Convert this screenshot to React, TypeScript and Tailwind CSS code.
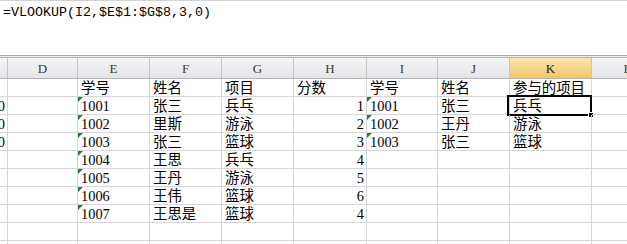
const COLS = ['C', 'D', 'E', 'F', 'G', 'H', 'I', 'J', 'K', 'L']

type Cell = { text?: string; align?: 'left' | 'right'; flag?: boolean; selected?: boolean }

const rows: Cell[][] = [
  [{}, {}, { text: '学号' }, { text: '姓名' }, { text: '项目' }, { text: '分数' }, { text: '学号' }, { text: '姓名' }, { text: '参与的项目' }, {}],
  [{ text: '0', align: 'right' }, {}, { text: '1001', flag: true }, { text: '张三' }, { text: '兵乓' }, { text: '1', align: 'right' }, { text: '1001', flag: true }, { text: '张三' }, { text: '兵乓', selected: true }, {}],
  [{ text: '0', align: 'right' }, {}, { text: '1002', flag: true }, { text: '里斯' }, { text: '游泳' }, { text: '2', align: 'right' }, { text: '1002', flag: true }, { text: '王丹' }, { text: '游泳' }, {}],
  [{ text: '0', align: 'right' }, {}, { text: '1003', flag: true }, { text: '张三' }, { text: '篮球' }, { text: '3', align: 'right' }, { text: '1003', flag: true }, { text: '张三' }, { text: '篮球' }, {}],
  [{}, {}, { text: '1004', flag: true }, { text: '王思' }, { text: '兵乓' }, { text: '4', align: 'right' }, {}, {}, {}, {}],
  [{}, {}, { text: '1005', flag: true }, { text: '王丹' }, { text: '游泳' }, { text: '5', align: 'right' }, {}, {}, {}, {}],
  [{}, {}, { text: '1006', flag: true }, { text: '王伟' }, { text: '篮球' }, { text: '6', align: 'right' }, {}, {}, {}, {}],
  [{}, {}, { text: '1007', flag: true }, { text: '王思是' }, { text: '篮球' }, { text: '4', align: 'right' }, {}, {}, {}, {}],
  [{}, {}, {}, {}, {}, {}, {}, {}, {}, {}],
  [{}, {}, {}, {}, {}, {}, {}, {}, {}, {}],
  [{}, {}, {}, {}, {}, {}, {}, {}, {}, {}],
]

function HeaderCell({ label }: { label: string }) {
  const active = label === 'K'
  // column C is scrolled almost out of view, its letter is not visible
  const shown = label !== 'C'
  return (
    <div
      className={`flex h-[21px] items-end justify-center overflow-hidden border-r border-b border-r-[#c5c5c5] border-b-[#b4b4b4] pb-[1px] text-[13px] leading-[16px] ${
        active ? 'bg-gradient-to-b from-[#fce6ad] to-[#f3c468] text-[#222]' : 'bg-gradient-to-b from-[#f4f5f6] to-[#e3e5e8] text-[#3a3a3a]'
      }`}
    >
      {shown ? label : null}
    </div>
  )
}

function DataCell({ cell }: { cell: Cell }) {
  return (
    <div
      className={`relative flex h-[18px] items-end border-r border-b border-[#d6d6d6] text-[14.4px] leading-[16px] text-black ${
        cell.align === 'right' ? 'justify-end pr-[2px]' : 'pl-[3px]'
      }`}
    >
      {cell.flag ? (
        <span className="absolute left-0 top-0 h-0 w-0 border-t-[5px] border-r-[5px] border-t-[#2b7d2b] border-r-transparent" />
      ) : null}
      <span className="whitespace-nowrap">{cell.text}</span>
      {cell.selected ? (
        <div className="absolute left-[-3px] top-[-2px] h-[21px] w-[85px] border-2 border-black">
          <span className="absolute right-[-4px] bottom-[-4px] h-[6px] w-[6px] border border-white bg-black" />
        </div>
      ) : null}
    </div>
  )
}

export default function App() {
  return (
    <div className="h-[244px] w-[627px] overflow-hidden bg-white font-['Liberation_Serif','Noto_Sans_CJK_SC',serif]">
      <div className="h-[56px] border-t border-b border-t-[#d2d2d2] border-b-[#a8a8a8] bg-white pl-[3px] pt-[3px] font-['Liberation_Mono','Noto_Sans_CJK_SC',monospace] text-[13.33px] leading-[18px] text-black">
        =VLOOKUP(I2,$E$1:$G$8,3,0)
      </div>
      <div className="h-[1px] bg-[#ececec]" />
      <div className="h-[1px] bg-[#b4b4b4]" />
      <div className="grid w-[664px] grid-cols-[8px_70px_72px_72px_72px_73px_71px_72px_82px_72px]">
        {COLS.map((c) => (
          <HeaderCell key={c} label={c} />
        ))}
        {rows.map((row, i) => row.map((cell, j) => <DataCell key={`${i}-${j}`} cell={cell} />))}
      </div>
    </div>
  )
}
